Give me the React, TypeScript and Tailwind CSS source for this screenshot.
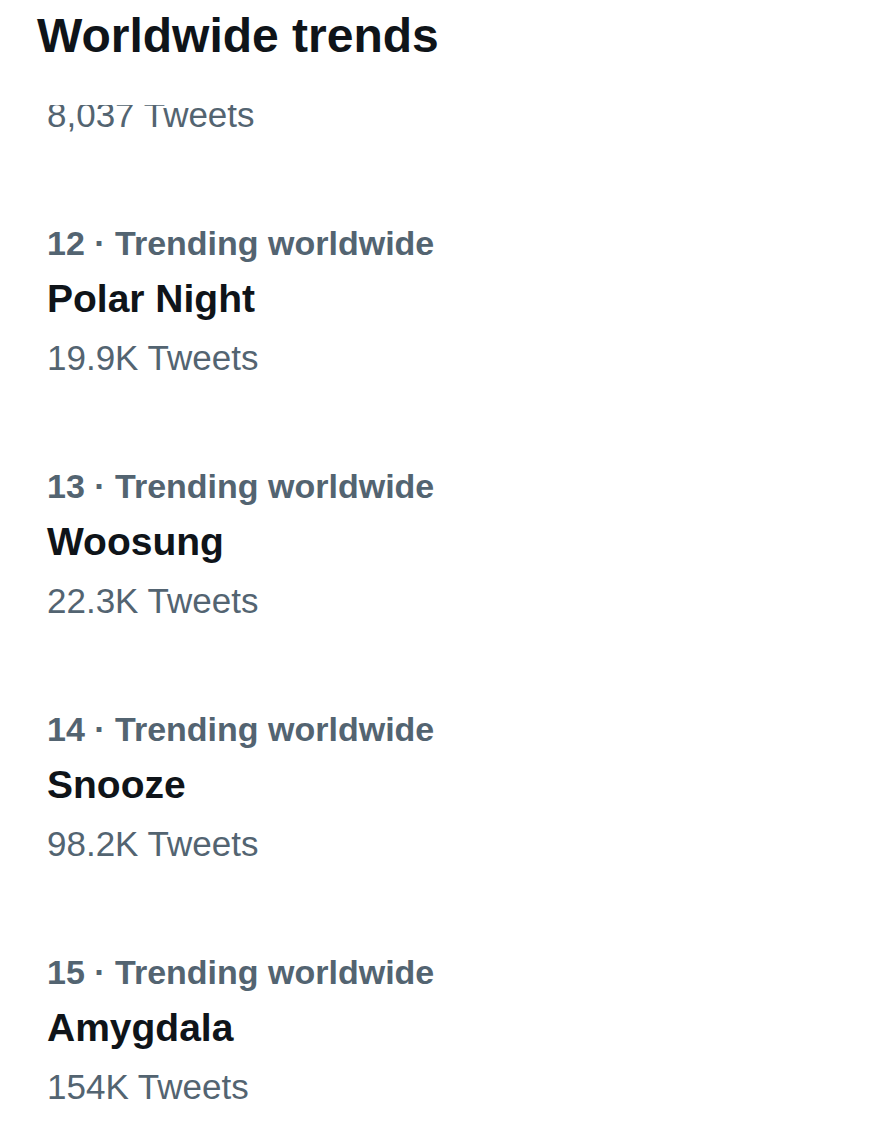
import React from "react";

const trends = [
  { rank: 11, name: "", count: "8,037 Tweets", hidden: true },
  { rank: 12, name: "Polar Night", count: "19.9K Tweets", hidden: false },
  { rank: 13, name: "Woosung", count: "22.3K Tweets", hidden: false },
  { rank: 14, name: "Snooze", count: "98.2K Tweets", hidden: false },
  { rank: 15, name: "Amygdala", count: "154K Tweets", hidden: false },
];

export default function App() {
  return (
    <div
      className="relative h-[1137px] w-[882px] overflow-hidden bg-white"
      style={{ fontFamily: '"Liberation Sans", Arial, sans-serif' }}
    >
      <div className="absolute inset-x-0 top-0 z-10 h-[105px] bg-white pl-[37px]">
        <h1 className="text-[48px] font-bold leading-[72px] text-[#0f1419]">Worldwide trends</h1>
      </div>
      <div className="mt-[-62px] flex flex-col">
        {trends.map((t) => (
          <div key={t.rank} className="flex h-[243px] flex-col pl-[47px] pt-[36px]">
            <div className="h-[52px] text-[34px] font-bold leading-[52px] text-[#536471]">
              {t.hidden ? null : `${t.rank} · Trending worldwide`}
            </div>
            <div className="h-[60px] text-[39px] font-bold leading-[60px] text-[#0f1419]">
              {t.hidden ? null : t.name}
            </div>
            <div className="h-[58px] text-[35px] leading-[58px] text-[#536471]">{t.count}</div>
          </div>
        ))}
      </div>
    </div>
  );
}
